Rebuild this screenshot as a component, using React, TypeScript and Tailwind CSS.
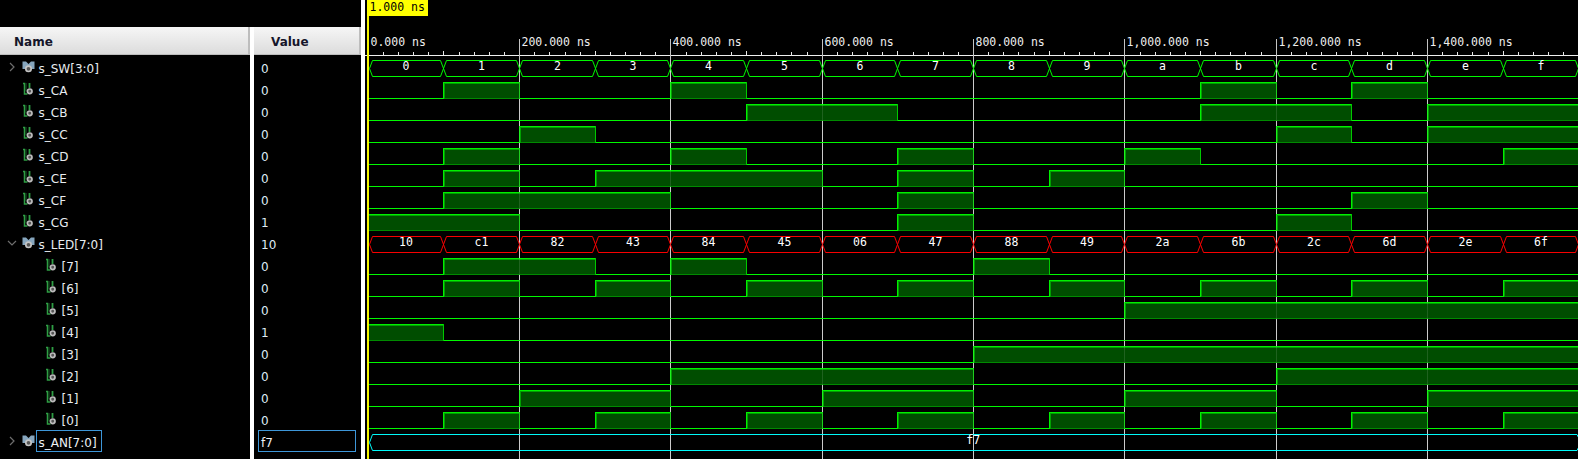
const X0 = 367.8;
const PERIOD = 75.66;
const xAt = (i: number) => Math.round(X0 + PERIOD * i);

const hexDigits = "0123456789abcdef".split("");
const ledValues = ["10", "c1", "82", "43", "84", "45", "06", "47", "88", "49", "2a", "6b", "2c", "6d", "2e", "6f"];
const ledBit = (bit: number) =>
  ledValues.map((v, i) => ((parseInt(v, 16) >> bit) & 1 ? i : -1)).filter((i) => i >= 0);

type Row = {
  name: string;
  value: string;
  kind: "bus" | "wire";
  child?: boolean;
  open?: boolean;
  selected?: boolean;
  high?: number[];
  labels?: string[];
  color?: string;
};

const rows: Row[] = [
  { name: "s_SW[3:0]", value: "0", kind: "bus", labels: hexDigits, color: "#00f800" },
  { name: "s_CA", value: "0", kind: "wire", high: [1, 4, 11, 13] },
  { name: "s_CB", value: "0", kind: "wire", high: [5, 6, 11, 12, 14, 15] },
  { name: "s_CC", value: "0", kind: "wire", high: [2, 12, 14, 15] },
  { name: "s_CD", value: "0", kind: "wire", high: [1, 4, 7, 10, 15] },
  { name: "s_CE", value: "0", kind: "wire", high: [1, 3, 4, 5, 7, 9] },
  { name: "s_CF", value: "0", kind: "wire", high: [1, 2, 3, 7, 13] },
  { name: "s_CG", value: "1", kind: "wire", high: [0, 1, 7, 12] },
  { name: "s_LED[7:0]", value: "10", kind: "bus", open: true, labels: ledValues, color: "#f80000" },
  ...[7, 6, 5, 4, 3, 2, 1, 0].map((bit): Row => ({
    name: `[${bit}]`,
    value: bit === 4 ? "1" : "0",
    kind: "wire",
    child: true,
    high: ledBit(bit),
  })),
  { name: "s_AN[7:0]", value: "f7", kind: "bus", selected: true, color: "#00f8f8" },
];

function WireIcon() {
  return (
    <svg width="12" height="14" viewBox="0 0 12 14" className="shrink-0">
      <path d="M1 1.500h1.500v10.500h3" fill="none" stroke="#2f9e44" strokeWidth="1.500" />
      <path d="M4 1v8" fill="none" stroke="#1a5c28" strokeWidth="1" />
      <path d="M7.500 1v5" fill="none" stroke="#2f9e44" strokeWidth="1.800" />
      <circle cx="7.700" cy="9.300" r="2.300" fill="#555555" stroke="#bcbcbc" strokeWidth="1.700" />
    </svg>
  );
}

function BusIcon() {
  return (
    <svg width="13" height="12" viewBox="0 0 13 12" className="shrink-0">
      <path d="M0.500 0.500h3.500l2.500 2.500 2.500-2.500h3.500v7.500h-2.500l-3.500-2-3.500 2h-2.500z" fill="#86a6be" />
      <circle cx="6.500" cy="7.800" r="2.700" fill="#555555" stroke="#c4c4c4" strokeWidth="1.700" />
    </svg>
  );
}

function Chevron({ open }: { open?: boolean }) {
  return (
    <svg width="10" height="10" viewBox="0 0 10 10" className="shrink-0">
      <path d={open ? "M1 3l4 4 4-4" : "M3 1l4 4-4 4"} fill="none" stroke="#6e6e6e" strokeWidth="1.200" />
    </svg>
  );
}

function NameRow({ row }: { row: Row }) {
  return (
    <div className={`flex h-[22px] items-center ${row.child ? "pl-[45px]" : "pl-[7px]"}`}>
      {!row.child && (
        <div className="w-[15px]">{row.kind === "bus" && <Chevron open={row.open} />}</div>
      )}
      <div className="flex w-[14px] items-center">{row.kind === "bus" ? <BusIcon /> : <WireIcon />}</div>
      {row.selected ? (
        <span className="box-border h-[22px] w-[66px] whitespace-pre border border-[#3d96d8] pl-[1.500px] pt-[3px] text-[12px] leading-[18px] text-[#eef2f6]">
          {row.name}
        </span>
      ) : (
        <span className="ml-[2.500px] whitespace-pre pt-[4px] text-[12px] text-[#e8ecf0]">{row.name}</span>
      )}
    </div>
  );
}

function ValueRow({ row }: { row: Row }) {
  return (
    <div className="flex h-[22px] items-center pl-[7px]">
      {row.selected ? (
        <span className="-ml-[3px] box-border h-[22px] w-[98px] border border-[#3d96d8] pl-[2px] pt-[3px] text-[12px] leading-[18px] text-[#eef2f6]">
          {row.value}
        </span>
      ) : (
        <span className="pt-[4px] text-[12px] text-[#dfeaf5]">{row.value}</span>
      )}
    </div>
  );
}

function HeaderCell({ label, className }: { label: string; className: string }) {
  return (
    <div
      className={`flex h-[28px] items-center border-r-2 border-b border-[#bdbdbd] bg-gradient-to-b from-[#f6f6f6] to-[#dcdcdc] pt-[2px] text-[12px] font-bold text-[#15152a] ${className}`}
    >
      {label}
    </div>
  );
}

function BusWave({ row, top }: { row: Row; top: number }) {
  const y1 = top + 0.5;
  const y2 = top + 16.5;
  const mid = top + 8.5;
  if (!row.labels) {
    const l = xAt(0) + 1.5;
    const r = 1577;
    return (
      <g>
        <path
          d={`M${r + 4} ${mid}L${r} ${y1}H${l + 3}L${l} ${mid}L${l + 3} ${y2}H${r}L${r + 4} ${mid}`}
          fill="none"
          stroke={row.color}
        />
        <text x={(l + r) / 2} y={top + 10} textAnchor="middle" className="fill-white font-['DejaVu_Sans_Mono',monospace] text-[11.500px]">
          {row.value}
        </text>
      </g>
    );
  }
  return (
    <g>
      {row.labels.map((label, i) => {
        const l = xAt(i) + 0.5;
        const r = xAt(i + 1) + 0.5;
        const lead = i === 0 ? 1 : 0;
        return (
          <g key={i}>
            <path
              d={`M${r + 3} ${y2}L${r - 3} ${y1}M${r + 3} ${y1}L${r - 3} ${y2}M${l + 3 + lead} ${y1}H${r - 3}M${l + 3 + lead} ${y2}H${r - 3}${
                i === 0 ? `M${l + 4} ${y1}L${l + 1} ${mid}L${l + 4} ${y2}` : ""
              }`}
              fill="none"
              stroke={row.color}
            />
            <text
              x={(l + r) / 2}
              y={top + 10}
              textAnchor="middle"
              className="fill-white font-['DejaVu_Sans_Mono',monospace] text-[11.500px]"
            >
              {label}
            </text>
          </g>
        );
      })}
    </g>
  );
}

function WireWave({ row, top }: { row: Row; top: number }) {
  const bottom = top + 16;
  const high = row.high ?? [];
  const start = xAt(0);
  return (
    <g shapeRendering="crispEdges">
      <rect x={start} y={bottom} width={1578 - start} height={1} fill="#00f800" />
      {Array.from({ length: 16 }, (_, i) => i)
        .filter((i) => high.includes(i))
        .map((i) => {
          const l = xAt(i);
          const r = i === 15 ? 1578 : xAt(i + 1);
          const rising = i > 0 && !high.includes(i - 1);
          const falling = i < 15 && !high.includes(i + 1);
          return (
            <g key={i}>
              <rect x={l} y={top} width={r - l + 1} height={16} fill="#004d00" />
              <rect x={l} y={top} width={r - l + 1} height={1} fill="#00f000" />
              <rect x={l} y={top + 1} width={r - l + 1} height={1} fill="#00a000" />
              <rect x={l} y={bottom} width={r - l + 1} height={1} fill="#008a00" />
              {rising && <rect x={l} y={top} width={1} height={17} fill="#00f000" />}
              {rising && <rect x={l + 1} y={top + 1} width={1} height={16} fill="#00a000" />}
              {falling && <rect x={r} y={top} width={1} height={17} fill="#00c800" />}
            </g>
          );
        })}
    </g>
  );
}

function Waveform() {
  const ticks = Array.from({ length: 81 }, (_, i) => i);
  const majors = [0, 1, 2, 3, 4, 5, 6, 7];
  const labels = ["0.000 ns", "200.000 ns", "400.000 ns", "600.000 ns", "800.000 ns", "1,000.000 ns", "1,200.000 ns", "1,400.000 ns"];
  return (
    <svg width="1213" height="459" viewBox="365 0 1213 459" className="block shrink-0">
      <g shapeRendering="crispEdges">
        <rect x="365" y="55" width="1213" height="1" fill="#f0f0f0" />
        {ticks.map((i) => {
          const x = Math.round(X0 + (PERIOD / 5) * i);
          return <rect key={i} x={x} y={i % 5 === 0 ? 51 : 52} width={1} height={4} fill="#e8e8e8" />;
        })}
        {majors.map((k) => (
          <rect key={k} x={xAt(k * 2)} y={39} width={1} height={420} fill="#c4c4c4" />
        ))}
      </g>
      {majors.map((k) => (
        <text
          key={k}
          x={xAt(k * 2) + 2.5}
          y={46}
          className="fill-[#eeeeee] font-['DejaVu_Sans_Mono',monospace] text-[11.500px]"
        >
          {labels[k]}
        </text>
      ))}
      {rows.map((row, i) =>
        row.kind === "bus" ? (
          <BusWave key={row.name} row={row} top={60 + 22 * i} />
        ) : (
          <WireWave key={row.name} row={row} top={60 + 22 * i} />
        ),
      )}
      <g shapeRendering="crispEdges">
        {majors.map((k) => (
          <rect key={k} x={xAt(k * 2)} y={60} width={1} height={399} fill="#ffffff" opacity={0.12} />
        ))}
        <rect x="367" y="0" width="2" height="459" fill="#f5f500" />
        <rect x="367" y="0" width="61" height="16" fill="#ffff00" />
      </g>
      <text x="369.500" y="11" className="fill-black font-['DejaVu_Sans_Mono',monospace] text-[11.500px]">
        1.000 ns
      </text>
    </svg>
  );
}

export default function App() {
  return (
    <div className="flex h-[459px] w-[1578px] overflow-hidden bg-black font-['DejaVu_Sans',sans-serif]">
      <div className="w-[250px] shrink-0 pt-[27px]">
        <HeaderCell label="Name" className="pl-[14px]" />
        <div className="pt-[1px]">
          {rows.map((row) => (
            <NameRow key={row.name} row={row} />
          ))}
        </div>
      </div>
      <div className="mt-[27px] w-[4px] shrink-0 bg-white" />
      <div className="w-[107px] shrink-0 pt-[27px]">
        <HeaderCell label="Value" className="pl-[17px]" />
        <div className="pt-[1px]">
          {rows.map((row) => (
            <ValueRow key={row.name} row={row} />
          ))}
        </div>
      </div>
      <div className="w-[4px] shrink-0 bg-white" />
      <Waveform />
    </div>
  );
}
